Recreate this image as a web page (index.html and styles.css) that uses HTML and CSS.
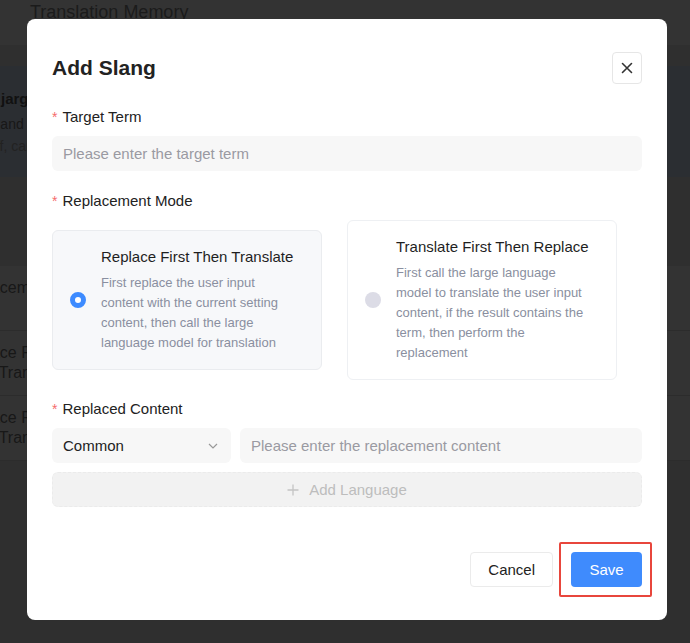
FILE: index.html
```html
<!DOCTYPE html>
<html lang="en">
<head>
    <meta charset="UTF-8" />
    <meta name="viewport" content="width=device-width, initial-scale=1.0" />
    <title>Add Slang - Translation Memory</title>
    <link rel="stylesheet" href="styles.css">
</head>
<body>

<div class="page">
    <header class="page-header">Translation Memory</header>
    <div class="page-body">
        <div class="notice">
            <p class="notice-title">Slang jargon</p>
            <p class="notice-text">Define and configure slang terms so that special words in the user input are not translated literally</p>
            <p class="notice-sub">Turn off, cancel or edit any entry at any time</p>
        </div>
        <table class="slang-table">
            <tr><th>Replacement Mode</th><td></td></tr>
            <tr><td>Replace First Then Translate</td><td></td></tr>
            <tr><td>Replace First Then Translate</td><td></td></tr>
        </table>
    </div>
</div>

<div class="mask"></div>

<div class="dialog-wrap">
    <div class="dialog">
        <div class="dialog-header">
            <h2 class="dialog-title">Add Slang</h2>
            <button class="close-btn" type="button" aria-label="Close">
                <svg width="12" height="12" viewBox="0 0 12 12"><path d="M1.5 1.5l9 9M10.5 1.5l-9 9" stroke="#333" stroke-width="1.6" fill="none" stroke-linecap="round"/></svg>
            </button>
        </div>

        <form class="form">
            <div class="form-item">
                <label class="field-label"><span class="req">*</span>Target Term</label>
                <input class="text-input" type="text" placeholder="Please enter the target term" />
            </div>

            <div class="form-item">
                <label class="field-label"><span class="req">*</span>Replacement Mode</label>
                <div class="mode-list">
                    <div class="mode-card active">
                        <span class="radio"></span>
                        <div class="mode-info">
                            <div class="mode-title">Replace First Then Translate</div>
                            <div class="mode-desc">First replace the user input content with the current setting content, then call the large language model for translation</div>
                        </div>
                    </div>
                    <div class="mode-card">
                        <span class="radio"></span>
                        <div class="mode-info">
                            <div class="mode-title">Translate First Then Replace</div>
                            <div class="mode-desc">First call the large language model to translate the user input content, if the result contains the term, then perform the replacement</div>
                        </div>
                    </div>
                </div>
            </div>

            <div class="form-item content-item">
                <label class="field-label"><span class="req">*</span>Replaced Content</label>
                <div class="content-row">
                    <div class="select">
                        <span>Common</span>
                        <svg width="10" height="6" viewBox="0 0 10 6"><path d="M1 1l4 4 4-4" stroke="#999" stroke-width="1.2" fill="none"/></svg>
                    </div>
                    <input class="text-input" type="text" placeholder="Please enter the replacement content" />
                </div>
                <button class="add-btn" type="button">
                    <svg width="12" height="12" viewBox="0 0 12 12"><path d="M6 0.5v11M0.5 6h11" stroke="#c4c4c4" stroke-width="1.3"/></svg>
                    Add Language
                </button>
            </div>
        </form>

        <div class="dialog-footer">
            <button class="btn btn-default" type="button">Cancel</button>
            <span class="save-wrap"><button class="btn btn-primary" type="button">Save</button></span>
        </div>
    </div>
</div>

</body>
</html>
```

FILE: styles.css
```css
body {
    margin: 0;
    font-family: "Liberation Sans", Arial, sans-serif;
    background-color: #ececec;
    overflow: hidden;
}

/* page behind the dialog */
.page-header {
    height: 45px;
    background-color: #ffffff;
    padding: 0 30px;
    font-size: 18px;
    line-height: 24px;
    color: #888;
}

.page-body {
    padding-top: 21px;
}

.notice {
    height: 111px;
    background-color: #d7e3f7;
    padding-top: 22px;
    box-sizing: border-box;
    white-space: nowrap;
    overflow: hidden;
}

.notice p {
    margin: 0 0 0 -44px;
    line-height: 22px;
}

.notice-title {
    font-weight: bold;
    font-size: 15px;
    color: #555;
}

.notice-text {
    font-size: 14px;
    color: #777;
    padding-top: 3px;
}

.notice-sub {
    font-size: 14px;
    color: #aaa;
}

.slang-table {
    margin: 89px 0 0 -42px;
    border-collapse: collapse;
    width: 740px;
    background-color: #ffffff;
    font-size: 16px;
    color: #777;
}

.slang-table th,
.slang-table td {
    text-align: left;
    font-weight: normal;
    line-height: 20px;
    height: 63px;
    padding: 0;
    border-bottom: 1px solid #dcdcdc;
}

.slang-table td {
    height: 64px;
}

.slang-table th:first-child,
.slang-table td:first-child {
    width: 110px;
}

.mask {
    position: fixed;
    inset: 0;
    background-color: rgba(0, 0, 0, 0.8);
}

/* dialog */
.dialog-wrap {
    position: fixed;
    inset: 0;
    padding: 19px 0 0 27px;
}

.dialog {
    width: 640px;
    background-color: #ffffff;
    border-radius: 8px;
    padding: 33px 25px;
    box-sizing: border-box;
    color: #222;
}

.dialog-header {
    display: flex;
    justify-content: space-between;
    align-items: center;
    height: 32px;
}

.dialog-title {
    margin: 0;
    font-size: 21px;
    font-weight: bold;
    color: #222;
}

.close-btn {
    width: 30px;
    height: 32px;
    padding: 0;
    border: 1px solid #e6e6e6;
    border-radius: 4px;
    background-color: #ffffff;
    display: flex;
    align-items: center;
    justify-content: center;
}

.form {
    margin-top: 23px;
}

.form-item + .form-item {
    margin-top: 20px;
}

.form-item.content-item {
    margin-top: 19px;
}

.field-label {
    display: flex;
    align-items: baseline;
    font-size: 15px;
    line-height: 20px;
    margin-bottom: 9px;
}

.req {
    color: #f56c6c;
    font-size: 14px;
    margin-right: 5px;
}

.text-input {
    display: block;
    width: 100%;
    height: 35px;
    padding: 0 11px;
    border: none;
    border-radius: 6px;
    background-color: #f7f7f7;
    font-family: inherit;
    font-size: 15px;
    color: #222;
    box-sizing: border-box;
    outline: none;
}

.text-input::placeholder {
    color: #9a9aa2;
}

.mode-list {
    display: flex;
    align-items: center;
    gap: 25px;
}

.mode-card {
    width: 270px;
    display: flex;
    align-items: center;
    gap: 15px;
    padding: 15px 22px 16px 17px;
    border: 1px solid #eef0f3;
    border-radius: 6px;
    background-color: #ffffff;
    box-sizing: border-box;
}

.mode-card.active {
    background-color: #f7f8fa;
    border-color: #eaecef;
}

.radio {
    flex: none;
    width: 16px;
    height: 16px;
    border-radius: 50%;
    background-color: #dcdce6;
    box-sizing: border-box;
}

.mode-card.active .radio {
    background-color: #ffffff;
    border: 5px solid #3d8bff;
}

.mode-title {
    font-size: 15px;
    line-height: 22px;
    color: #1f1f1f;
}

.mode-desc {
    margin-top: 5px;
    font-size: 13px;
    line-height: 20px;
    color: #8a8fa0;
}

.content-row {
    display: flex;
    gap: 9px;
}

.select {
    flex: none;
    width: 179px;
    height: 35px;
    padding: 0 13px 0 11px;
    border-radius: 6px;
    background-color: #f7f7f7;
    display: flex;
    align-items: center;
    justify-content: space-between;
    font-size: 15px;
    box-sizing: border-box;
}

.add-btn {
    margin-top: 9px;
    width: 100%;
    height: 35px;
    border: 1px dashed #ebebeb;
    border-radius: 6px;
    background-color: #f2f2f2;
    display: flex;
    align-items: center;
    justify-content: center;
    gap: 10px;
    font-family: inherit;
    font-size: 15px;
    color: #bdbdbd;
}

.dialog-footer {
    margin-top: 45px;
    display: flex;
    justify-content: flex-end;
    gap: 18px;
}

.btn {
    height: 35px;
    border-radius: 4px;
    font-family: inherit;
    font-size: 15px;
    cursor: pointer;
}

.btn-default {
    padding: 0 17px;
    border: 1px solid #ebebeb;
    background-color: #ffffff;
    color: #222;
}

.btn-primary {
    width: 71px;
    border: none;
    background-color: #3f8bfd;
    color: #ffffff;
}

.save-wrap {
    position: relative;
    display: flex;
}

/* highlight frame around Save */
.save-wrap::after {
    content: "";
    position: absolute;
    top: -10px;
    bottom: -10px;
    left: -12px;
    right: -10px;
    border: 2px solid #e8463c;
    border-radius: 2px;
}
```
